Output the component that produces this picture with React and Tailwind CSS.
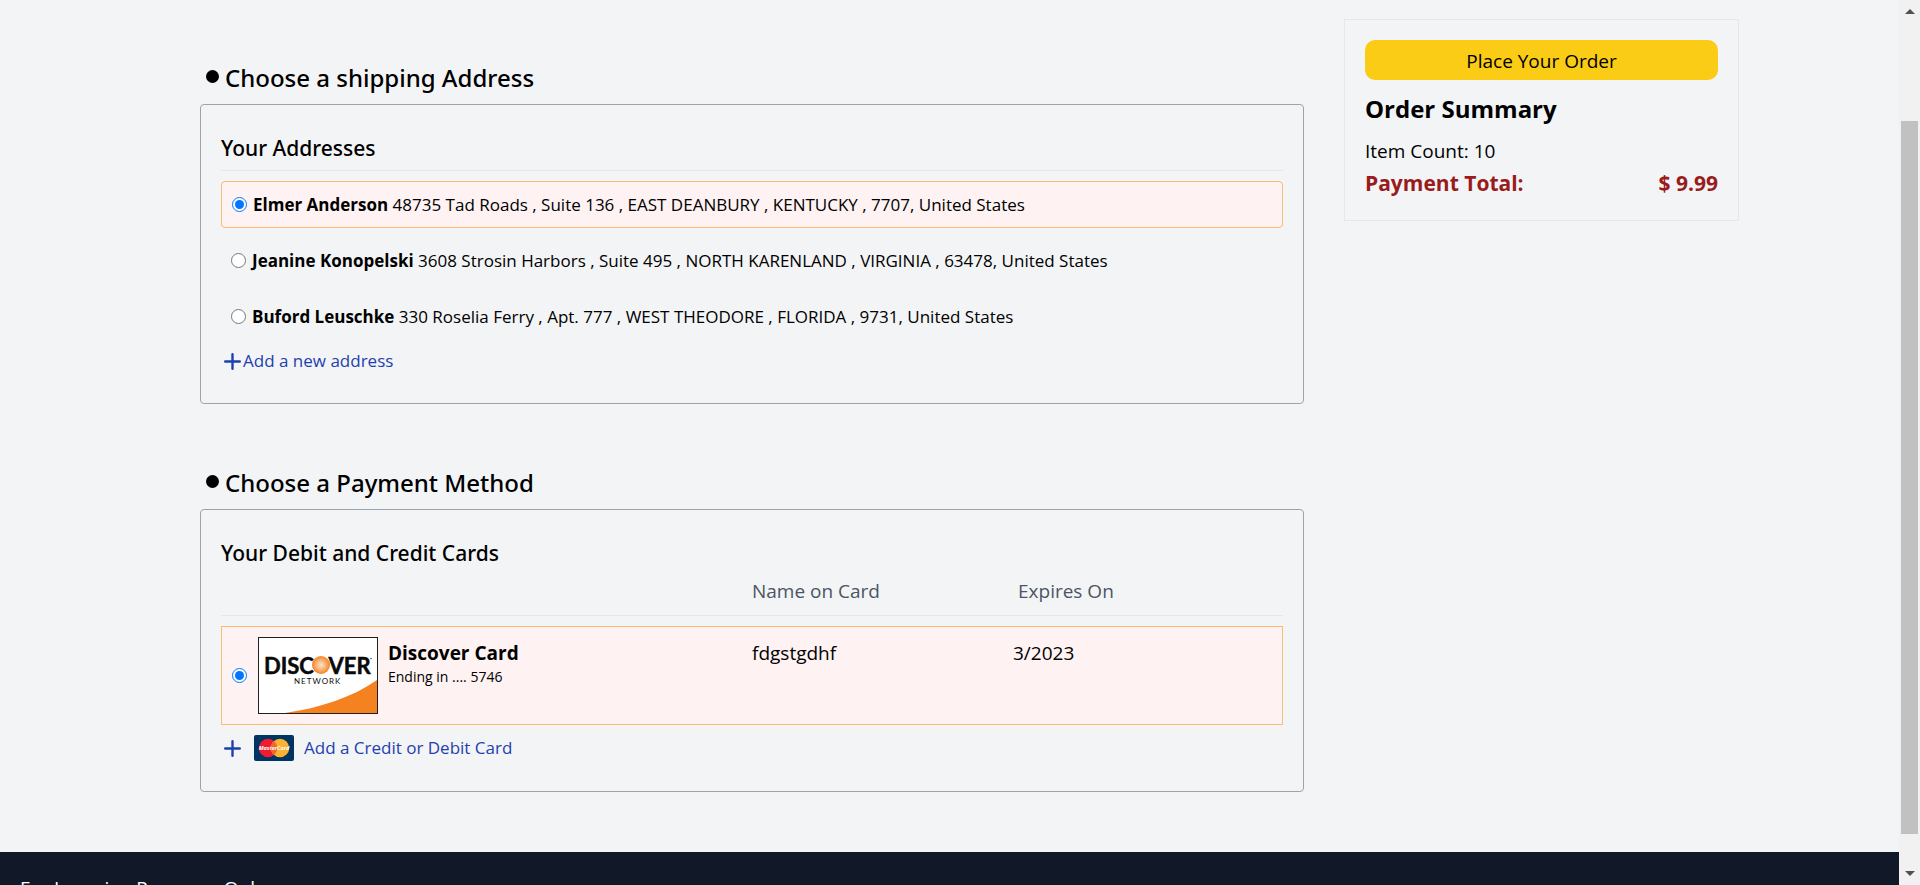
import { useState } from "react";

const addresses = [
  { id: "a1", name: "Elmer Anderson", text: "48735 Tad Roads , Suite 136 , EAST DEANBURY , KENTUCKY , 7707, United States" },
  { id: "a2", name: "Jeanine Konopelski", text: "3608 Strosin Harbors , Suite 495 , NORTH KARENLAND , VIRGINIA , 63478, United States" },
  { id: "a3", name: "Buford Leuschke", text: "330 Roselia Ferry , Apt. 777 , WEST THEODORE , FLORIDA , 9731, United States" },
];

function PlusIcon() {
  return (
    <svg viewBox="0 0 17 17" className="size-[17px] shrink-0" stroke="currentColor" strokeWidth="2.4" strokeLinecap="round" aria-hidden="true">
      <path d="M8.5 1.2v14.6M1.2 8.5h14.6" />
    </svg>
  );
}

function DiscoverLogo() {
  return (
    <svg viewBox="0 0 120 77" className="block h-[77px] w-[120px] shrink-0" role="img" aria-label="Discover Network">
      <defs>
        <radialGradient id="discover-ball">
          <stop offset="0" stopColor="#fde3cb" />
          <stop offset="0.5" stopColor="#fab67c" />
          <stop offset="1" stopColor="#f58220" />
        </radialGradient>
      </defs>
      <rect x="0.5" y="0.5" width="119" height="76" fill="#fff" stroke="#1f1f1f" />
      <path d="M27 76C62 71 95 60 119 43V76Z" fill="#f58220" />
      <g fontFamily="Lato, 'Open Sans', sans-serif" fill="#0a0a0a">
        <text x="6" y="36.5" fontSize="22" fontWeight="700" stroke="#0a0a0a" strokeWidth="0.5">DISC</text>
        <text x="70.5" y="36.5" fontSize="22" fontWeight="700" stroke="#0a0a0a" strokeWidth="0.5">VER</text>
        <text x="36" y="47" fontSize="8" letterSpacing="1">NETWORK</text>
      </g>
      <circle cx="63" cy="28" r="9" fill="url(#discover-ball)" />
      <circle cx="113" cy="21.5" r="0.8" fill="#555" />
    </svg>
  );
}

function MastercardLogo() {
  return (
    <svg viewBox="0 0 40 26" className="block h-[26px] w-10 shrink-0" aria-hidden="true">
      <rect width="40" height="26" rx="2" fill="#003463" />
      <circle cx="14" cy="13" r="9.2" fill="#ed1c2e" />
      <circle cx="26" cy="13" r="9.2" fill="#fcb131" />
      <path d="M20 6.03a9.2 9.2 0 0 1 0 13.94a9.2 9.2 0 0 1 0-13.94Z" fill="#f26a2a" />
      <text x="20" y="15" textAnchor="middle" fontFamily="'Open Sans', sans-serif" fontSize="5.5" fontStyle="italic" fontWeight="700" fill="#fff">MasterCard</text>
    </svg>
  );
}

function StepHeading({ children }) {
  return (
    <h2 className="mb-2 flex items-center gap-1.5 pl-1.5 font-['Noto_Sans','Open_Sans',sans-serif] text-[24px] leading-9 font-medium">
      <span className="mb-[3px] size-[13px] rounded-full bg-black" />
      {children}
    </h2>
  );
}

export default function App() {
  const [address, setAddress] = useState("a1");

  return (
    <div className="flex h-screen overflow-hidden bg-[#f3f4f6] font-['Open_Sans','Noto_Sans',sans-serif] text-black">
      <div className="min-w-0 flex-1 overflow-hidden">
        <main className="mx-auto flex max-w-[1579px] items-start gap-10 pb-[60px] pl-10">
          <div className="min-w-0 flex-1 pt-[60px]">
            <section>
              <StepHeading>Choose a shipping Address</StepHeading>
              <div className="rounded border border-[#9ca3af] px-5 pt-[29px] pb-7">
                <h3 className="border-b border-[#e5e7eb] pb-2 font-['Noto_Sans','Open_Sans',sans-serif] text-[21px] leading-7 font-medium">Your Addresses</h3>
                <div className="mt-2.5 flex flex-col gap-[9px]">
                  {addresses.map((a) => (
                    <label
                      key={a.id}
                      htmlFor={a.id}
                      className={
                        a.id === address
                          ? "flex h-[47px] items-center gap-1.5 rounded border border-[#fdba74] bg-[#fef2f2] px-2.5 text-[17px]"
                          : "flex h-[47px] items-center gap-1.5 rounded px-2.5 text-[17px]"
                      }
                    >
                      <input
                        id={a.id}
                        type="radio"
                        name="address"
                        className="size-[15px] shrink-0"
                        checked={a.id === address}
                        onChange={() => setAddress(a.id)}
                      />
                      <span>
                        <b>{a.name}</b> {a.text}
                      </span>
                    </label>
                  ))}
                </div>
                <a href="#new-address" className="mt-[7px] flex items-center gap-0.5 pl-[3px] text-[17px] leading-7 text-[#1e40af]">
                  <PlusIcon />
                  Add a new address
                </a>
              </div>
            </section>

            <section className="mt-[61px]">
              <StepHeading>Choose a Payment Method</StepHeading>
              <div className="rounded border border-[#9ca3af] px-5 pt-[29px] pb-[29px]">
                <h3 className="font-['Noto_Sans','Open_Sans',sans-serif] text-[21px] leading-7 font-medium">Your Debit and Credit Cards</h3>
                <table className="mt-2.5 w-full table-fixed border-separate border-spacing-0 text-left text-[19px] leading-7">
                  <thead className="text-[#4b5563]">
                    <tr>
                      <th className="w-1/2 border-b border-[#e5e7eb] pb-2.5" aria-label="Card" />
                      <th className="border-b border-[#e5e7eb] pb-2.5 font-normal">Name on Card</th>
                      <th className="w-[270px] border-b border-[#e5e7eb] pb-2.5 pl-[5px] font-normal">Expires On</th>
                    </tr>
                  </thead>
                  <tbody className="before:block before:h-2.5 before:content-['']">
                    <tr className="align-top">
                      <td className="border-y border-l border-[#fdba74] bg-[#fef2f2] py-2.5 pl-2.5">
                        <label htmlFor="c1" className="flex items-center gap-2.5">
                          <input id="c1" type="radio" name="card" defaultChecked className="mr-px size-[15px] shrink-0" />
                          <DiscoverLogo />
                          <span className="flex flex-col self-start pt-0.5">
                            <b className="text-[19px] leading-7">Discover Card</b>
                            <span className="text-[14px] leading-5">Ending in .... 5746</span>
                          </span>
                        </label>
                      </td>
                      <td className="border-y border-[#fdba74] bg-[#fef2f2] pt-3">fdgstgdhf</td>
                      <td className="border-y border-r border-[#fdba74] bg-[#fef2f2] pt-3">3/2023</td>
                    </tr>
                  </tbody>
                </table>
                <a href="#new-card" className="mt-[9px] flex items-center pl-[3px] text-[17px] leading-7 text-[#1e40af]">
                  <PlusIcon />
                  <span className="mr-2.5 ml-[13px]">
                    <MastercardLogo />
                  </span>
                  Add a Credit or Debit Card
                </a>
              </div>
            </section>
          </div>

          <aside className="mt-[19px] w-[395px] shrink-0 border border-[#e5e7eb] px-5 pt-5 pb-[23px]">
            <button type="button" className="block h-10 w-full rounded-[10px] bg-[#facc15] pt-0.5 text-[19px]">
              Place Your Order
            </button>
            <h2 className="mt-[13px] text-[24px] leading-8 font-bold">Order Summary</h2>
            <p className="mt-3 text-[19px] leading-7">Item Count: 10</p>
            <p className="mt-1 flex justify-between text-[21px] leading-7 font-bold text-[#991b1b]">
              <span>Payment Total:</span>
              <span>$ 9.99</span>
            </p>
          </aside>
        </main>
        <footer className="bg-[#111827] px-5 pt-5 pb-10 text-[19px] leading-8 text-white">For Learning Purposes Only</footer>
      </div>

      <div className="flex w-[21px] shrink-0 flex-col items-center justify-between bg-[#f1f1f1] py-[9px]" aria-hidden="true">
        <svg viewBox="0 0 10 5" className="h-[5px] w-2.5" fill="#505050"><path d="M0 5 5 0l5 5Z" /></svg>
        <div className="mt-[107px] mb-[37px] w-[17px] flex-1 bg-[#c1c1c1]" />
        <svg viewBox="0 0 10 5" className="h-[5px] w-2.5" fill="#505050"><path d="M0 0h10L5 5Z" /></svg>
      </div>
    </div>
  );
}
